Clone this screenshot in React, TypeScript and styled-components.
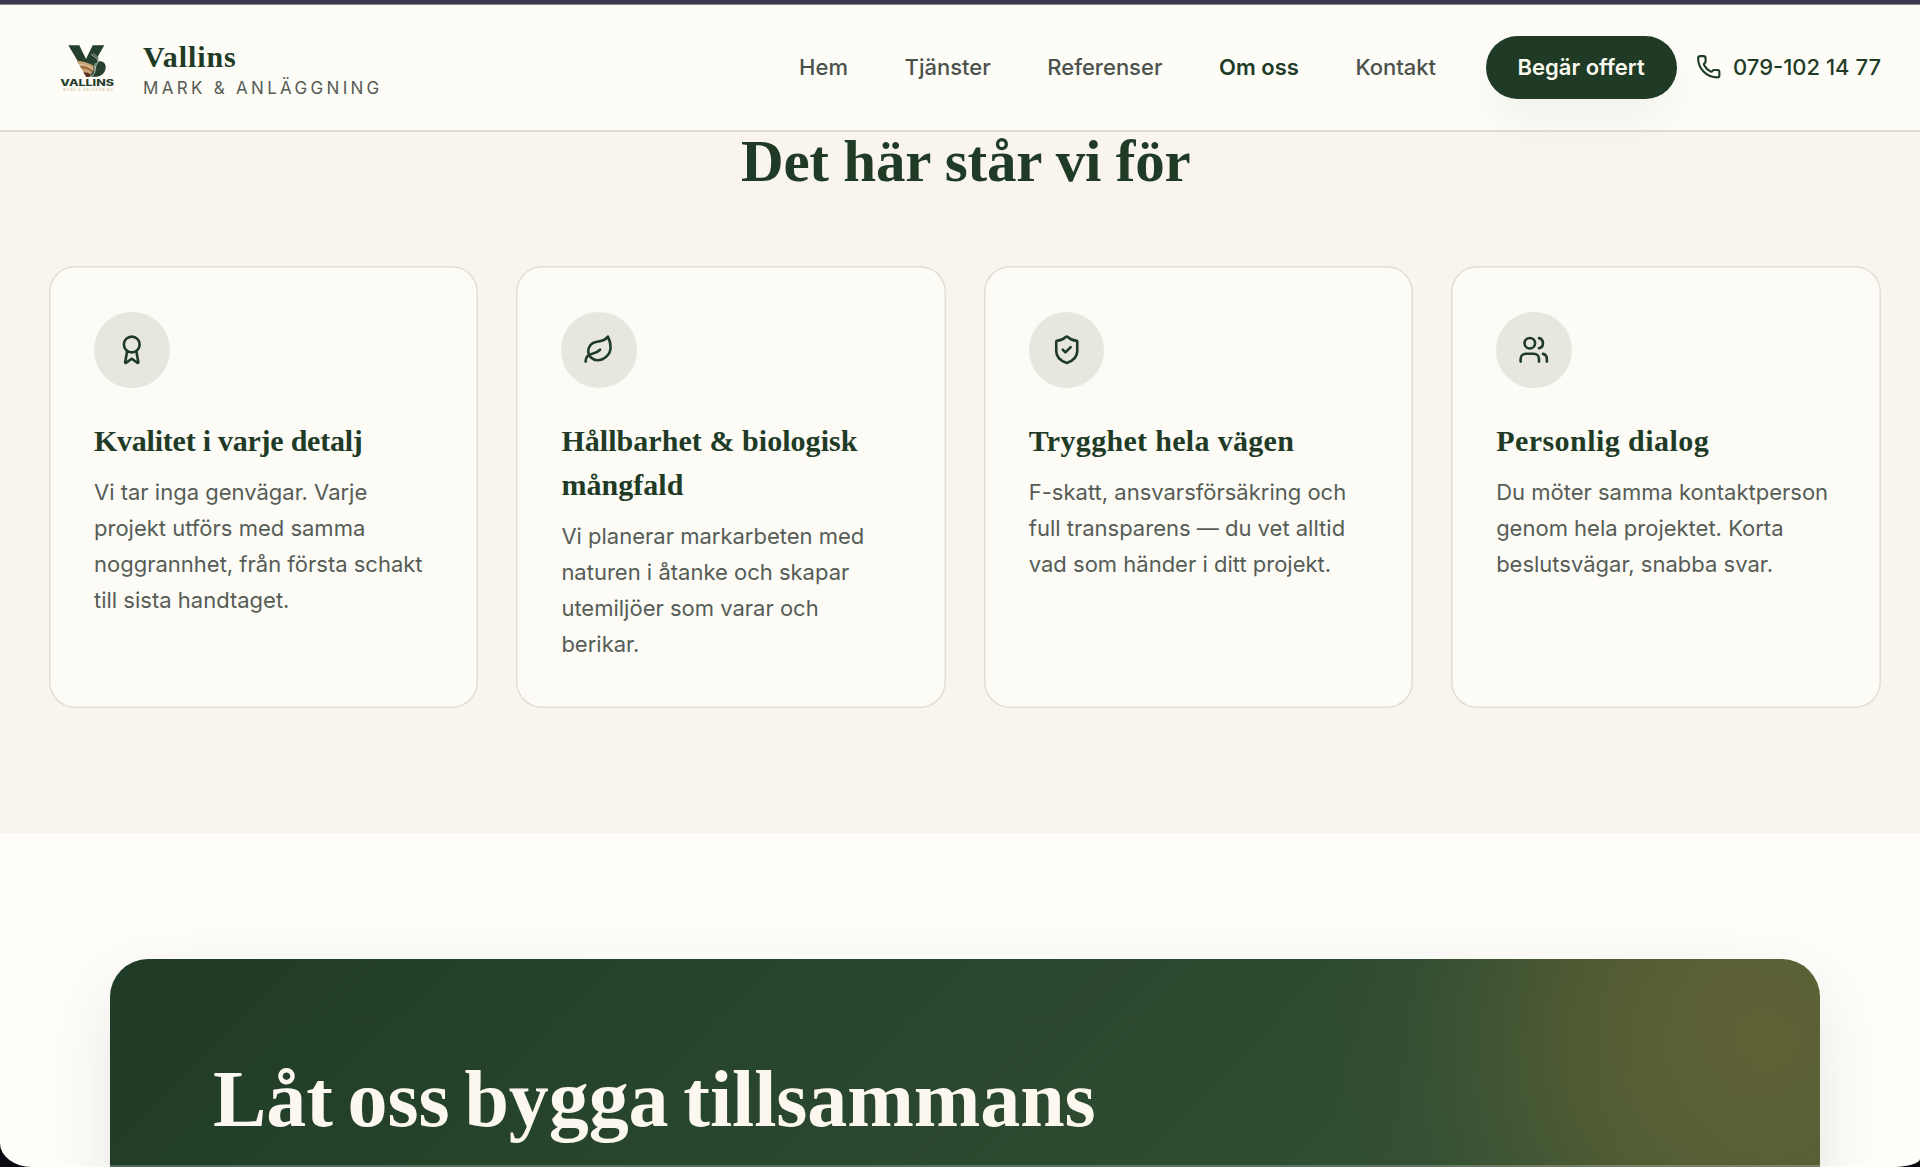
import React from "react";
import styled, { createGlobalStyle } from "styled-components";
import { Award, Leaf, Phone, ShieldCheck, Users } from "lucide-react";
import type { LucideIcon } from "lucide-react";

const color = {
  forest: "#1f3b26",
  paper: "#fdfcf7",
  page: "#fefdf9",
  sand: "#f9f4ed",
  line: "#e3ddd0",
  body: "#565d56",
  nav: "#4a524b",
};

const serif = `"Liberation Serif", "Times New Roman", serif`;
const sans = `Inter, "Liberation Sans", sans-serif`;

const GlobalStyle = createGlobalStyle`
  *, *::before, *::after { box-sizing: border-box; }
  body {
    margin: 0;
    background: #0a0c12;
    font-family: ${sans};
    -webkit-font-smoothing: antialiased;
  }
  h1, h2, h3, p { margin: 0; }
`;

const Window = styled.div`
  position: relative;
  display: flex;
  flex-direction: column;
  height: 1167px;
  overflow: hidden;
  background: ${color.page};
  border-top: 4px solid #3b394f;
  border-radius: 0 0 30px 32px / 0 0 8px 24px;

  &::after {
    content: "";
    position: absolute;
    inset: auto 0 0 0;
    height: 2px;
    background: rgba(255, 255, 255, 0.22);
  }
`;

const Header = styled.header`
  position: relative;
  z-index: 1;
  flex: none;
  display: flex;
  align-items: center;
  justify-content: space-between;
  height: 128px;
  padding: 0 39px 0 60px;
  background: ${color.paper};
  border-top: 1px solid #85848d;
  border-bottom: 2px solid ${color.line};
`;

const Brand = styled.a`
  display: flex;
  align-items: center;
  gap: 26px;
  color: ${color.forest};
`;

const LogoSvg = styled.svg`
  display: block;
  width: 57px;
  height: 48px;
`;

const BrandText = styled.div`
  display: flex;
  flex-direction: column;
  padding-top: 10px;
`;

const BrandName = styled.span`
  font: 700 30px/32px ${serif};
  letter-spacing: 0.9px;
`;

const BrandTag = styled.span`
  font: 400 17px/31px ${sans};
  letter-spacing: 3.3px;
  color: ${color.body};
`;

const Nav = styled.nav`
  display: flex;
  align-items: center;
`;

const NavLinks = styled.div`
  display: flex;
  gap: 56.6px;
  margin-right: 49.5px;
`;

const NavLink = styled.a<{ $active?: boolean }>`
  padding-bottom: 2px;
  font: ${(p) => (p.$active ? 600 : 500)} 22px/32px ${sans};
  color: ${(p) => (p.$active ? color.forest : color.nav)};
`;

const QuoteButton = styled.a`
  display: flex;
  align-items: center;
  justify-content: center;
  width: 191px;
  height: 63px;
  margin-right: 19px;
  padding-bottom: 2px;
  border-radius: 32px;
  background: ${color.forest};
  color: #fbf8ef;
  font: 600 22px/32px ${sans};
  box-shadow: 0 20px 50px -8px rgba(31, 59, 60, 0.07);
`;

const PhoneLink = styled.a`
  display: flex;
  align-items: center;
  gap: 12px;
  padding-bottom: 2px;
  color: ${color.forest};
  font: 500 22px/32px ${sans};
`;

const Values = styled.section`
  flex: none;
  height: 701px;
  padding: 0 39.5px 0 49px;
  background: ${color.sand};
`;

const SectionTitle = styled.h2`
  height: 134px;
  padding-left: 2px;
  text-align: center;
  color: ${color.forest};
  font: 700 59px/58px ${serif};
  letter-spacing: -0.2px;
`;

const CardGrid = styled.div`
  display: grid;
  grid-template-columns: repeat(4, 1fr);
  gap: 38px;
  height: 441px;
`;

const Card = styled.article`
  padding: 46px 45px 45px;
  background: #fcfbf6;
  box-shadow: inset 0 0 0 1.5px ${color.line};
  border-radius: 26px;
`;

const IconDisc = styled.div`
  display: flex;
  align-items: center;
  justify-content: center;
  width: 75.5px;
  height: 75.5px;
  margin-bottom: 31.5px;
  border-radius: 50%;
  background: #e7e7e0;
  color: ${color.forest};
`;

const CardTitle = styled.h3<{ $tracking: number }>`
  margin-bottom: 12px;
  color: ${color.forest};
  font: 700 30px/44px ${serif};
  letter-spacing: ${(p) => p.$tracking}px;
`;

const CardText = styled.p`
  color: ${color.body};
  font: 400 22px/35.9px ${sans};
`;

const CtaSection = styled.section`
  flex: none;
  padding: 126px 100px 0 110px;
`;

const CtaPanel = styled.div`
  height: 560px;
  padding: 92px 103px;
  border-radius: 38px;
  background:
    radial-gradient(
      circle at 1645px 70px,
      rgba(170, 125, 50, 0.36) 0,
      rgba(170, 125, 50, 0.33) 90px,
      rgba(170, 125, 50, 0.26) 175px,
      rgba(170, 125, 50, 0.14) 260px,
      rgba(170, 125, 50, 0.03) 350px,
      rgba(170, 125, 50, 0) 430px
    ),
    linear-gradient(135deg, #1f3b26 0%, #3a593b 100%);
  box-shadow: 0 25px 70px -12px rgba(31, 59, 50, 0.16);
`;

const CtaTitle = styled.h2`
  color: #fcf8f0;
  font: 700 80px/96px ${serif};
  letter-spacing: -0.1px;
  word-spacing: -5px;
  white-space: nowrap;
`;

function Logo() {
  return (
    <LogoSvg viewBox="180 130 171 144" aria-label="Vallins">
      <path d="M205 134h33l20 41 20-41h35l-19 33 3 15c13-1 21 7 20 19-1 14-12 25-26 27h-24l-14-21-20-26z" fill="#26402e" />
      <path d="M230 180c18 1 36 6 51 15l-2 14-10 20h-10z" fill="#c9a274" />
      <path d="M240 196c14-1 27 4 38 12l-4 8c-9-6-18-9-28-10z" fill="#a0703f" />
      <path d="M250 215c9 0 16 2 22 6l-4 8h-9z" fill="#5b2f20" />
      <path d="M237 191c15 0 29 5 41 13M246 206c11 0 20 3 29 10" fill="none" stroke="#f3e8d6" strokeWidth="1.6" />
      <path d="M274 161l19 14 1 9c-9 8-7 20-10 30-2 7-7 12-13 14" fill="none" stroke="#fdfcf7" strokeWidth="2.2" />
      <path d="M280 158l17 15-2 11M286 187c-3 8-3 16-5 24" fill="none" stroke="#fdfcf7" strokeWidth="1.5" />
      <text x="181" y="257" fontFamily={sans} fontWeight="800" fontSize="25" textLength="161" lengthAdjust="spacingAndGlyphs" fill="#26402e">
        VALLINS
      </text>
      <text x="190" y="270" fontFamily={sans} fontWeight="500" fontSize="8.5" textLength="148" fill="#cdb492">
        MARK &amp; ANLÄGGNING
      </text>
    </LogoSvg>
  );
}

const links = ["Hem", "Tjänster", "Referenser", "Om oss", "Kontakt"];

const values: { icon: LucideIcon; title: string; tracking: number; text: string }[] = [
  {
    icon: Award,
    title: "Kvalitet i varje detalj",
    tracking: -0.24,
    text: "Vi tar inga genvägar. Varje projekt utförs med samma noggrannhet, från första schakt till sista handtaget.",
  },
  {
    icon: Leaf,
    title: "Hållbarhet & biologisk mångfald",
    tracking: 0.05,
    text: "Vi planerar markarbeten med naturen i åtanke och skapar utemiljöer som varar och berikar.",
  },
  {
    icon: ShieldCheck,
    title: "Trygghet hela vägen",
    tracking: 0.32,
    text: "F-skatt, ansvarsförsäkring och full transparens — du vet alltid vad som händer i ditt projekt.",
  },
  {
    icon: Users,
    title: "Personlig dialog",
    tracking: 0.45,
    text: "Du möter samma kontaktperson genom hela projektet. Korta beslutsvägar, snabba svar.",
  },
];

export default function App() {
  return (
    <>
      <GlobalStyle />
      <Window>
        <Header>
          <Brand>
            <Logo />
            <BrandText>
              <BrandName>Vallins</BrandName>
              <BrandTag>MARK &amp; ANLÄGGNING</BrandTag>
            </BrandText>
          </Brand>
          <Nav>
            <NavLinks>
              {links.map((label) => (
                <NavLink key={label} $active={label === "Om oss"}>
                  {label}
                </NavLink>
              ))}
            </NavLinks>
            <QuoteButton>Begär offert</QuoteButton>
            <PhoneLink>
              <Phone size={25.5} strokeWidth={2} />
              079-102 14 77
            </PhoneLink>
          </Nav>
        </Header>
        <Values>
          <SectionTitle>Det här står vi för</SectionTitle>
          <CardGrid>
            {values.map(({ icon: Icon, title, tracking, text }) => (
              <Card key={title}>
                <IconDisc>
                  <Icon size={31.5} strokeWidth={2} />
                </IconDisc>
                <CardTitle $tracking={tracking}>{title}</CardTitle>
                <CardText>{text}</CardText>
              </Card>
            ))}
          </CardGrid>
        </Values>
        <CtaSection>
          <CtaPanel>
            <CtaTitle>Låt oss bygga tillsammans</CtaTitle>
          </CtaPanel>
        </CtaSection>
      </Window>
    </>
  );
}
